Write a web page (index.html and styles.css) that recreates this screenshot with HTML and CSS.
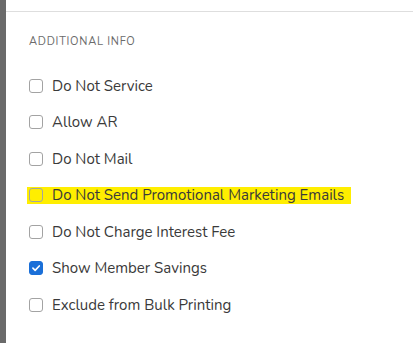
FILE: index.html
```html
<!DOCTYPE html>
<html>
<head>
<meta charset="utf-8">
<link rel="stylesheet" href="styles.css">
</head>
<body>
<div class="frame">
  <div class="sidebar"></div>
  <div class="panel">
    <div class="topbar"></div>
    <div class="section">
      <div class="title">ADDITIONAL INFO</div>
      <ul class="list">
        <li class="item"><span class="box"></span><span class="label">Do Not Service</span></li>
        <li class="item"><span class="box"></span><span class="label">Allow AR</span></li>
        <li class="item"><span class="box"></span><span class="label">Do Not Mail</span></li>
        <li class="item hl"><span class="box"></span><span class="label">Do Not Send Promotional Marketing Emails</span></li>
        <li class="item"><span class="box"></span><span class="label">Do Not Charge Interest Fee</span></li>
        <li class="item"><span class="box checked"><svg viewBox="0 0 14 14" width="14" height="14"><path d="M3.4 7.2 L6 9.8 L10.8 4.6" fill="none" stroke="#fff" stroke-width="1.9" stroke-linecap="round" stroke-linejoin="round"/></svg></span><span class="label">Show Member Savings</span></li>
        <li class="item"><span class="box"></span><span class="label">Exclude from Bulk Printing</span></li>
      </ul>
    </div>
  </div>
</div>
</body>
</html>
```
FILE: styles.css
```css
html, body { margin: 0; padding: 0; background: #fff; }
body { font-family: "Nunito", "Lato", "Noto Sans", sans-serif; }
.frame { display: flex; width: 413px; height: 343px; overflow: hidden; }
.sidebar { width: 6px; flex: none; background: #6a6a6a; }
.panel { flex: 1; display: flex; flex-direction: column; }
.topbar { height: 11px; border-bottom: 1px solid #dedede; }
.section { padding: 24px 0 0 23px; }
.title { font-size: 11px; letter-spacing: 0.75px; color: #6b6b6b; line-height: 12px; }
.list { list-style: none; margin: 28px 0 0 0; padding: 0; display: flex; flex-direction: column; gap: 17.5px; }
.item { display: flex; align-items: center; height: 19px; }
.item.hl { background: #ffee00; margin-left: -2px; padding-left: 2px; width: 322px; height: 17px; margin-top: 1px; margin-bottom: 1px; }
.box { width: 14px; height: 14px; border: 1px solid #a3a3a3; border-radius: 3px; box-sizing: border-box; flex: none; display: flex; align-items: center; justify-content: center; }
.box.checked { background: #1a6fd8; border-color: #1a6fd8; }
.box.checked svg { width: 14px; height: 14px; }
.label { margin-left: 9px; font-size: 15px; color: #3a3a3a; }
```
